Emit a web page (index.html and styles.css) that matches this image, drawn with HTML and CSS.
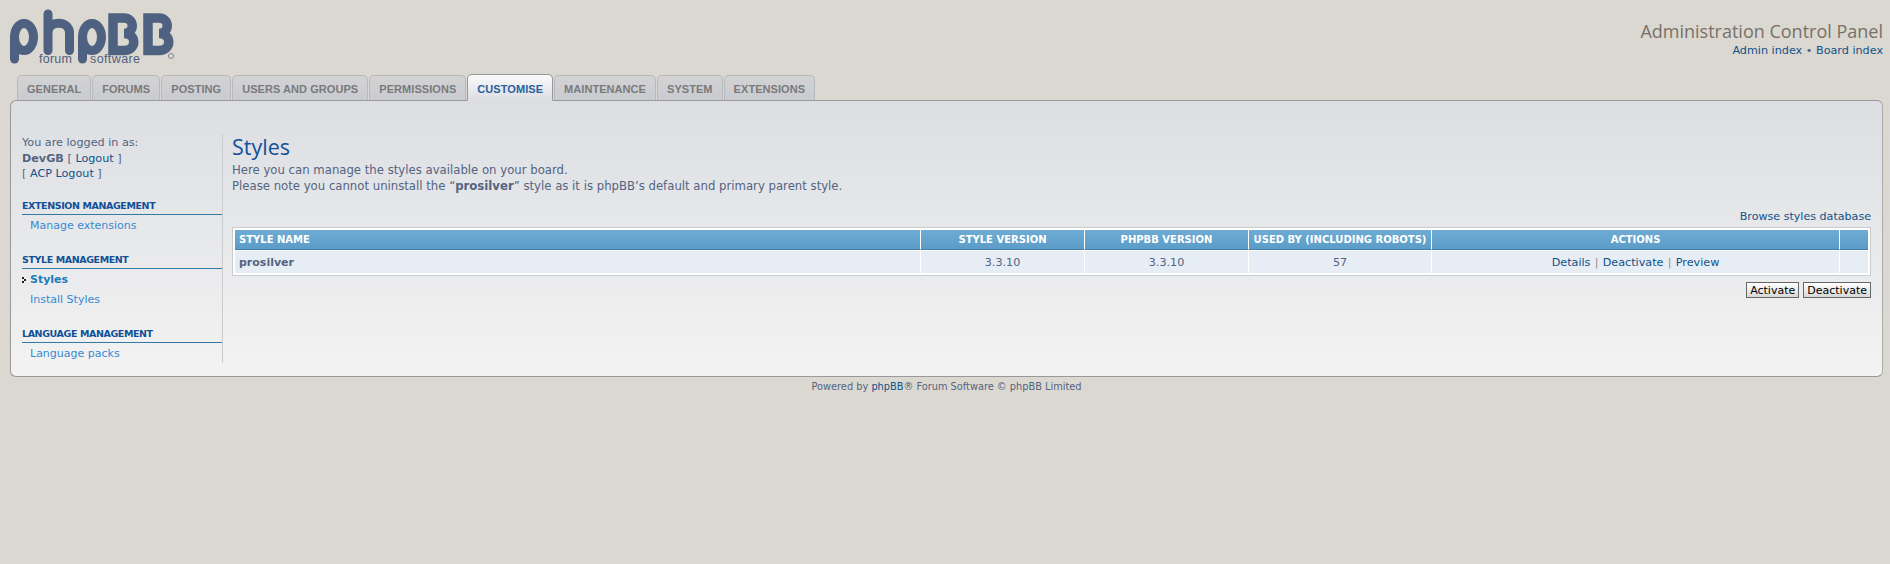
FILE: index.html
```html
<!DOCTYPE html>
<html lang="en">
<head>
<meta charset="utf-8">
<title>Styles</title>
<link rel="stylesheet" href="styles.css">
</head>
<body>
<div class="wrap">
  <header class="top">
    <svg class="logo" width="175" height="65" viewBox="0 0 175 65" role="img" aria-label="phpBB">
      <g fill="none" stroke="#4f6180" stroke-width="9" stroke-linecap="round">
        <ellipse cx="24" cy="37" rx="9.500" ry="13.500"/>
        <path d="M14.500 37V59"/>
        <path d="M48 14V50.500M48 33C48 20 69.500 20 69.500 33V50.500"/>
        <ellipse cx="92" cy="37" rx="9.500" ry="13.500"/>
        <path d="M82.500 37V59"/>
      </g>
      <g fill="none" stroke="#4f6180" stroke-width="9.500">
        <path d="M113 18H124C135 18 135 33.500 124 33.500C137 33.500 137 50.500 124 50.500H113Z"/>
        <path d="M148 18H159C170 18 170 33.500 159 33.500C172 33.500 172 50.500 159 50.500H148Z"/>
      </g>
      <text class="logo-sub" x="39" y="63" textLength="33">forum</text>
      <text class="logo-sub" x="90" y="63" textLength="50">software</text>
      <circle cx="171" cy="56" r="2.500" fill="none" stroke="#7b8798"/>
    </svg>
    <div class="title">
      <h1>Administration Control Panel</h1>
      <p><a href="#">Admin index</a> • <a href="#">Board index</a></p>
    </div>
  </header>

  <nav class="tabs">
    <a class="tab" href="#">General</a>
    <a class="tab" href="#">Forums</a>
    <a class="tab" href="#">Posting</a>
    <a class="tab" href="#">Users and groups</a>
    <a class="tab" href="#">Permissions</a>
    <a class="tab active" href="#">Customise</a>
    <a class="tab" href="#">Maintenance</a>
    <a class="tab" href="#">System</a>
    <a class="tab" href="#">Extensions</a>
  </nav>

  <div class="panel">
    <aside class="side">
      <div class="user">
        You are logged in as:<br>
        <strong>DevGB</strong> [ <a href="#">Logout</a> ]<br>
        [ <a href="#">ACP Logout</a> ]
      </div>
      <h2>Extension management</h2>
      <ul><li><a href="#">Manage extensions</a></li></ul>
      <h2>Style management</h2>
      <ul>
        <li class="current"><a href="#">Styles</a></li>
        <li><a href="#">Install Styles</a></li>
      </ul>
      <h2>Language management</h2>
      <ul><li><a href="#">Language packs</a></li></ul>
    </aside>
    <main class="main">
      <h1>Styles</h1>
      <p class="intro">Here you can manage the styles available on your board.<br>Please note you cannot uninstall the “<strong>prosilver</strong>” style as it is phpBB’s default and primary parent style.</p>
      <p class="browse"><a href="#">Browse styles database</a></p>
      <div class="table-box">
        <table>
          <thead>
            <tr>
              <th class="c-name">Style name</th>
              <th class="c-ver">Style version</th>
              <th class="c-ver">phpBB version</th>
              <th class="c-used">Used by (including robots)</th>
              <th>Actions</th>
              <th class="c-last"></th>
            </tr>
          </thead>
          <tbody>
            <tr>
              <td class="c-name"><strong>prosilver</strong></td>
              <td>3.3.10</td>
              <td>3.3.10</td>
              <td>57</td>
              <td><a href="#">Details</a> <span class="sep">|</span> <a href="#">Deactivate</a> <span class="sep">|</span> <a href="#">Preview</a></td>
              <td></td>
            </tr>
          </tbody>
        </table>
      </div>
      <div class="buttons">
        <button type="button">Activate</button>
        <button type="button">Deactivate</button>
      </div>
    </main>
  </div>

  <footer class="foot">Powered by <a href="#">phpBB</a>® Forum Software © phpBB Limited</footer>
</div>
</body>
</html>
```

FILE: styles.css
```css
* { box-sizing: border-box; }
html, body { margin: 0; padding: 0; }
body {
  background: #dbd8d1;
  color: #536482;
  font-family: "DejaVu Sans", Verdana, sans-serif;
  font-size: 11px;
  line-height: 16px;
  height: 564px;
  overflow: hidden;
}
a { color: #105289; text-decoration: none; }
.wrap { padding: 0 7px 0 0; }

.top { display: flex; justify-content: space-between; height: 74px; }
.logo { display: block; margin: 0; }
.logo-sub { font-family: "Liberation Sans", Arial, sans-serif; font-size: 12.500px; fill: #4f6180; }
.title { text-align: right; padding-top: 20px; }
.title h1 {
  margin: 0;
  font-family: "Open Sans", sans-serif;
  font-weight: 400;
  font-size: 18px;
  line-height: 22px;
  color: #787069;
}
.title p { margin: 1px 0 0; font-size: 11.200px; line-height: 15px; }

.tabs { display: flex; gap: 1px; padding-left: 17px; height: 27px; align-items: flex-end; position: relative; z-index: 1; margin-bottom: -1px; }
.tab {
  display: block;
  height: 25px;
  margin-bottom: 1px;
  padding: 0 9px;
  border: 1px solid #b9b9bb;
  border-bottom: 0;
  border-radius: 5px 5px 0 0;
  background: linear-gradient(#d3d3d5, #c9cbd0);
  color: #7a7a7a;
  font-family: "Liberation Sans", Arial, sans-serif;
  font-size: 11px;
  font-weight: bold;
  line-height: 26px;
  letter-spacing: .06px;
  text-transform: uppercase;
}
.tab.active {
  height: 27px;
  margin-bottom: 0;
  border-color: #999;
  background: linear-gradient(#fafafb, #dcdee2);
  color: #28619f;
  line-height: 28px;
  border-bottom: 1px solid #dcdee2;
}

.panel {
  display: flex;
  height: 277px;
  margin-left: 10px;
  border: 1px solid #999;
  border-right-color: #aaa;
  border-radius: 6px;
  background: linear-gradient(#dcdee2, #f3f3f3);
  padding: 33px 11px 0 11px;
}
.side { width: 201px; height: 229px; border-right: 1px solid #ccc; }
.user { height: 48px; padding-top: 1px; font-size: 11.200px; line-height: 15.500px; }
.side h2 {
  margin: 17px 0 0;
  padding: 0;
  font-size: 9.500px;
  letter-spacing: -.4px;
  line-height: 14px;
  font-weight: bold;
  text-transform: uppercase;
  color: #115098;
  border-bottom: 1px solid #327aa5;
  height: 16px;
}
.side ul { list-style: none; margin: 0; padding: 1px 0 0 8px; }
.side li { line-height: 20px; }
.side li a { color: #368ad2; }
.side li.current { position: relative; }
.side li.current a { color: #1d7bb8; font-weight: bold; }
.side li.current::before {
  content: "";
  position: absolute;
  left: -8px;
  top: 7px;
  width: 2px;
  height: 2px;
  background: #222;
  box-shadow: 2px 2px 0 #222, 0 4px 0 #222;
}

.main { flex: 1; padding-left: 9px; }
.main h1 {
  margin: 0;
  font-family: "Open Sans", sans-serif;
  font-weight: 400;
  font-size: 21.500px;
  line-height: 26px;
  color: #115098;
}
.intro { margin: 3px 0 0; font-size: 11.700px; line-height: 15.500px; }
.browse { margin: 15px 0 0; text-align: right; font-size: 11.100px; line-height: 16px; }
.table-box { margin-top: 2px; }
table {
  width: 100%;
  table-layout: fixed;
  border-collapse: separate;
  border-spacing: 0;
  border: 1px solid #ccc;
  padding: 2px;
  background: #fff;
}
th {
  height: 20px;
  padding: 0 4px;
  background: linear-gradient(#6eacd4, #5b9cc8);
  border-bottom: 1px solid #3f7ea8;
  border-left: 1px solid #fff;
  color: #fff;
  font-size: 10px;
  font-weight: bold;
  text-transform: uppercase;
  text-align: center;
}
td {
  height: 23px;
  padding: 1px 4px 0;
  background: #e6edf4;
  background-clip: padding-box;
  border-top: 1px solid #fff;
  border-left: 1px solid #fff;
  text-align: center;
  font-size: 11.200px;
}
th.c-name, td.c-name { width: 685px; text-align: left; border-left: 0; }
td.c-name { font-size: 11px; }
.c-ver { width: 164px; }
.c-used { width: 183px; }
.c-last { width: 29px; }
.sep { color: #a5897a; margin: 0 .7px; }
.buttons { display: flex; justify-content: flex-end; gap: 4px; margin-top: 6px; }
button {
  height: 16px;
  padding: 0 3px;
  border: 1px solid #666;
  background: linear-gradient(#fff, #d8d8d8);
  color: #000;
  font-family: "DejaVu Sans", Verdana, sans-serif;
  font-size: 11px;
  line-height: 13px;
}

.foot { margin: 4px 0 0 10px; text-align: center; font-size: 9.800px; line-height: 12px; }
```
